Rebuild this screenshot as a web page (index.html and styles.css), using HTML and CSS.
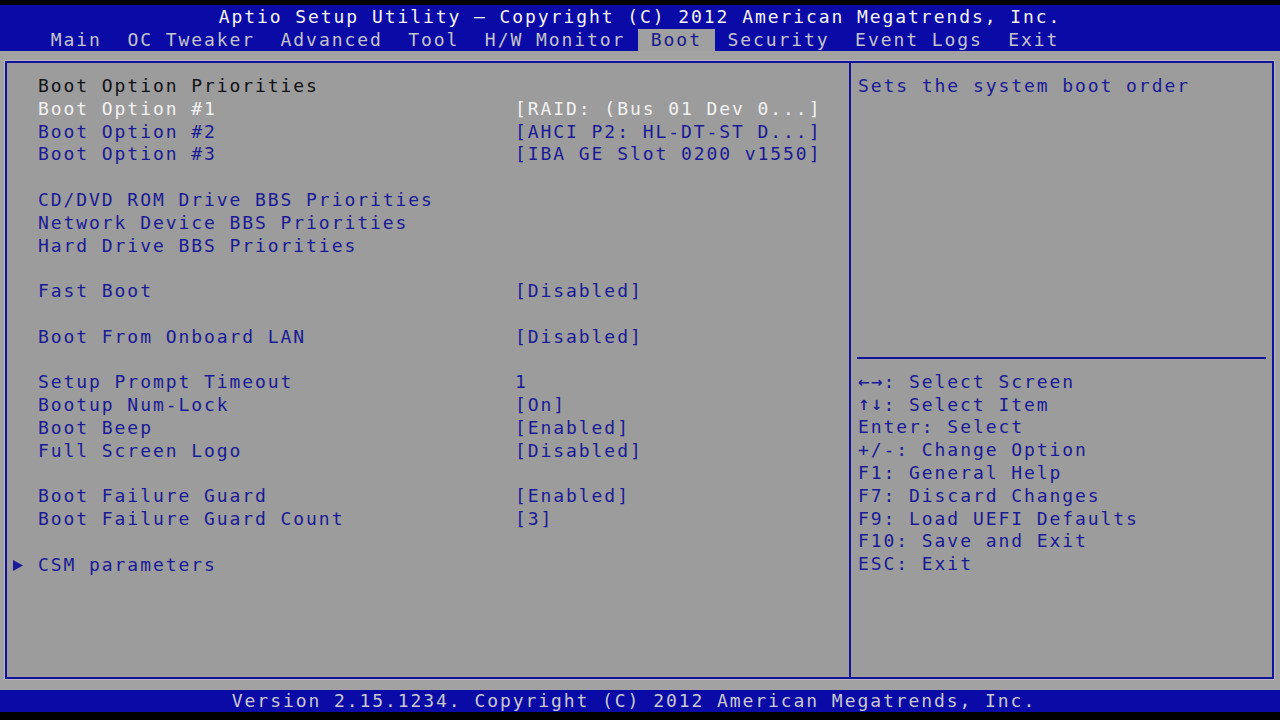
FILE: index.html
```html
<!DOCTYPE html>
<html lang="en">
<head>
<meta charset="utf-8">
<title>Aptio Setup Utility</title>
<link rel="stylesheet" href="styles.css">
</head>
<body>
<div class="screen">
  <header class="top">
    <div class="title">Aptio Setup Utility – Copyright (C) 2012 American Megatrends, Inc.</div>
    <nav class="tabs">
      <span class="tab">Main</span><span class="tab">OC Tweaker</span><span class="tab">Advanced</span><span class="tab">Tool</span><span class="tab">H/W Monitor</span><span class="tab active">Boot</span><span class="tab">Security</span><span class="tab">Event Logs</span><span class="tab">Exit</span>
    </nav>
  </header>
  <main class="body">
    <div class="frame">
      <section class="left">
        <div class="row"><span class="mk"></span><span class="lbl head">Boot Option Priorities</span><span class="val"></span></div>
        <div class="row sel"><span class="mk"></span><span class="lbl">Boot Option #1</span><span class="val">[RAID: (Bus 01 Dev 0...]</span></div>
        <div class="row"><span class="mk"></span><span class="lbl">Boot Option #2</span><span class="val">[AHCI P2: HL-DT-ST D...]</span></div>
        <div class="row"><span class="mk"></span><span class="lbl">Boot Option #3</span><span class="val">[IBA GE Slot 0200 v1550]</span></div>
        <div class="row blank"></div>
        <div class="row"><span class="mk"></span><span class="lbl">CD/DVD ROM Drive BBS Priorities</span><span class="val"></span></div>
        <div class="row"><span class="mk"></span><span class="lbl">Network Device BBS Priorities</span><span class="val"></span></div>
        <div class="row"><span class="mk"></span><span class="lbl">Hard Drive BBS Priorities</span><span class="val"></span></div>
        <div class="row blank"></div>
        <div class="row"><span class="mk"></span><span class="lbl">Fast Boot</span><span class="val">[Disabled]</span></div>
        <div class="row blank"></div>
        <div class="row"><span class="mk"></span><span class="lbl">Boot From Onboard LAN</span><span class="val">[Disabled]</span></div>
        <div class="row blank"></div>
        <div class="row"><span class="mk"></span><span class="lbl">Setup Prompt Timeout</span><span class="val">1</span></div>
        <div class="row"><span class="mk"></span><span class="lbl">Bootup Num-Lock</span><span class="val">[On]</span></div>
        <div class="row"><span class="mk"></span><span class="lbl">Boot Beep</span><span class="val">[Enabled]</span></div>
        <div class="row"><span class="mk"></span><span class="lbl">Full Screen Logo</span><span class="val">[Disabled]</span></div>
        <div class="row blank"></div>
        <div class="row"><span class="mk"></span><span class="lbl">Boot Failure Guard</span><span class="val">[Enabled]</span></div>
        <div class="row"><span class="mk"></span><span class="lbl">Boot Failure Guard Count</span><span class="val">[3]</span></div>
        <div class="row blank"></div>
        <div class="row"><span class="mk"><svg class="tri" width="10" height="11" viewBox="0 0 10 11"><polygon points="0,0 10,5.5 0,11" fill="#1a1a9c"/></svg></span><span class="lbl">CSM parameters</span><span class="val"></span></div>
      </section>
      <aside class="right">
        <div class="help">Sets the system boot order</div>
        <hr class="sep">
        <div class="keys">
          <div class="line"><b class="arw">←→</b>: Select Screen</div>
          <div class="line"><b class="arw">↑↓</b>: Select Item</div>
          <div class="line">Enter: Select</div>
          <div class="line">+/-: Change Option</div>
          <div class="line">F1: General Help</div>
          <div class="line">F7: Discard Changes</div>
          <div class="line">F9: Load UEFI Defaults</div>
          <div class="line">F10: Save and Exit</div>
          <div class="line">ESC: Exit</div>
        </div>
      </aside>
    </div>
  </main>
  <footer class="foot">Version 2.15.1234. Copyright (C) 2012 American Megatrends, Inc.</footer>
</div>
</body>
</html>
```

FILE: styles.css
```css
html, body {
  margin: 0;
  padding: 0;
  background: #000;
}
.screen {
  width: 1280px;
  height: 720px;
  display: flex;
  flex-direction: column;
  padding-top: 5px;
  box-sizing: border-box;
  font-family: "DejaVu Sans Mono", "Liberation Mono", monospace;
  font-size: 18px;
  letter-spacing: 1.93px;
  overflow: hidden;
}
.top {
  background: #0a0aa6;
  height: 46px;
  display: flex;
  flex-direction: column;
}
.title {
  height: 23px;
  line-height: 23px;
  text-align: center;
  color: #f4f4f4;
  white-space: nowrap;
}
.tabs {
  display: flex;
  padding-left: 38px;
  height: 23px;
  align-items: flex-end;
}
.tab {
  padding: 0 12.77px;
  height: 22px;
  line-height: 22px;
  color: #c4c4cc;
  white-space: nowrap;
}
.tab.active {
  background: #a0a0a0;
  color: #1a1a8c;
}
.body {
  flex: 1;
  background: #a2a2a2;
  padding: 10px 6px 11px 5px;
  display: flex;
  min-height: 0;
}
.frame {
  flex: 1;
  display: flex;
  border: 2px solid #12129a;
  outline: 1px solid #b6b6be;
  background: #9c9c9c;
}
.left {
  width: 844px;
  flex: none;
  border-right: 2px solid #12129a;
  padding: 12px 0 0 6px;
  box-sizing: border-box;
}
.row {
  display: grid;
  grid-template-columns: 25px 477px 1fr;
  height: 22.8px;
  line-height: 22.8px;
  color: #1a1a96;
  white-space: nowrap;
}
.mk {
  display: flex;
  align-items: center;
}
.tri {
  display: block;
}
.head {
  color: #111118;
}
.sel {
  color: #f2f2f2;
}
.right {
  flex: 1;
  padding: 12px 6px 0 6px;
  color: #1a1a96;
  display: flex;
  flex-direction: column;
  white-space: nowrap;
}
.help {
  line-height: 22.8px;
  height: 22.8px;
  padding-left: 1px;
}
.sep {
  border: 0;
  height: 2px;
  background: #12129a;
  margin: 259px 0 0 0;
}
.keys {
  padding-top: 12px;
  padding-left: 1px;
}
.line {
  height: 22.8px;
  line-height: 22.8px;
}
.arw {
  font-family: "DejaVu Sans", sans-serif;
  font-weight: bold;
  letter-spacing: 1px;
  font-size: 14px;
  display: inline-block;
  width: 25.5px;
  overflow: hidden;
  vertical-align: top;
}
.foot {
  background: #0a0aa6;
  height: 22px;
  line-height: 22px;
  margin-bottom: 8px;
  text-align: center;
  color: #c8c8d0;
  padding-right: 12px;
  white-space: nowrap;
}
```
